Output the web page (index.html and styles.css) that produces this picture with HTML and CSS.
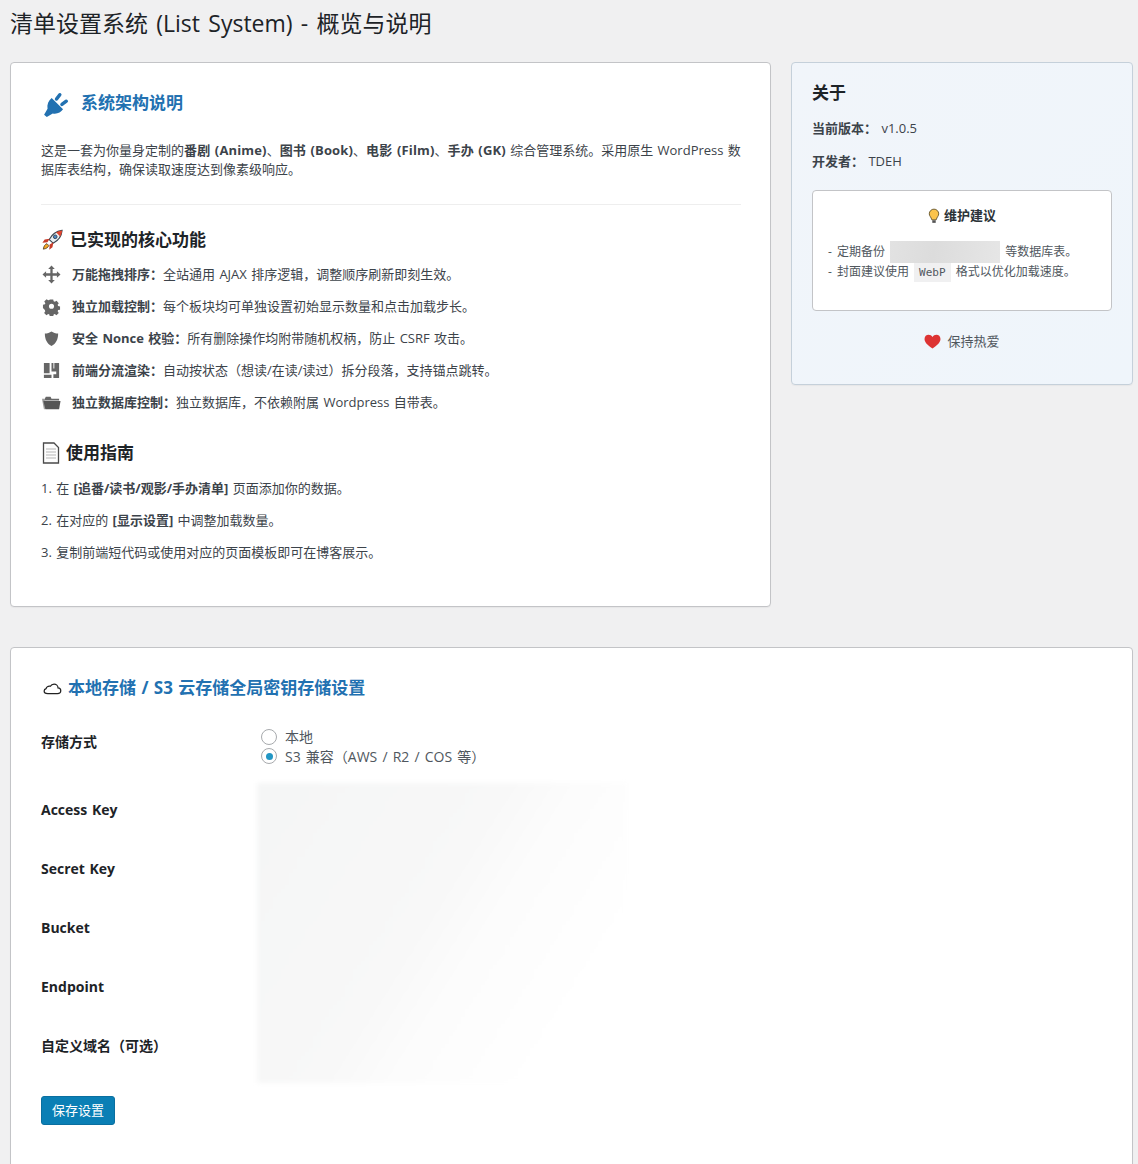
FILE: index.html
```html
<!DOCTYPE html>
<html lang="zh-CN">
<head>
<meta charset="utf-8">
<title>清单设置系统</title>
<link rel="stylesheet" href="styles.css">
</head>
<body>
<div class="wrap">
  <h1 class="page-title">清单设置系统 (List System) - 概览与说明</h1>
  <div class="columns">
    <section class="card main-card">
      <h2 class="arch-title">
        <svg class="plug" viewBox="0 0 24 24"><path fill="#2271b1" d="M8 5.500L18.500 16c-2 3-5.500 4.500-9.500 3.800L3.500 23 1 21l3.200-5.500C3.500 11.500 5 8 8 5.500z"/><path fill="none" stroke="#2271b1" stroke-width="3.200" stroke-linecap="round" d="M12.500 6.500L15.500 2.500M17.500 11.500L21.500 8.500"/></svg>
        <span>系统架构说明</span>
      </h2>
      <p class="intro">这是一套为你量身定制的<b>番剧 (Anime)</b>、<b>图书 (Book)</b>、<b>电影 (Film)</b>、<b>手办 (GK)</b> 综合管理系统。采用原生 WordPress 数据库表结构&#xFF0C;确保读取速度达到像素级响应。</p>
      <hr class="rule">
      <h3 class="sub-title rocket-title">
        <svg class="emoji" viewBox="0 0 24 24"><path fill="#e8eef2" stroke="#3a4650" stroke-width="1.200" d="M9 11.500C12 5.500 17 2.200 23 1.500c-.5 6-3.800 11-9.800 14z"/><path fill="#e2452f" d="M23 1.500c-2.600.3-4.800 1-6.600 2.100l4.500 4.500c1.100-1.900 1.900-4 2.100-6.600z"/><circle cx="15.500" cy="8.500" r="2" fill="#4a88c7" stroke="#33424e"/><path fill="#c73c2a" d="M9.500 10.500L4 11.500 1.500 15l5.500-.5zM13.500 14.500L12.500 20 9 22.500l.5-5.500z"/><path fill="#f6a623" stroke="#3a2a1a" stroke-width=".8" d="M6.500 16c-2 .6-3.500 2.500-4 6 3.500-.5 5.400-2 6-4z"/></svg>
        <span>已实现的核心功能</span>
      </h3>
      <ul class="features">
        <li>
          <svg class="f-icon" viewBox="0 0 20 20"><path fill="#666" d="M10 .500l3.500 3.800H11.200v4.500h4.500V6.500L19.500 10l-3.800 3.500v-2.300H11.200v4.500h2.300L10 19.500l-3.500-3.800h2.300v-4.500H4.300v2.300L.500 10l3.800-3.500v2.300h4.500V4.300H6.500z"/></svg>
          <span><b>万能拖拽排序&#xFF1A;</b>全站通用 AJAX 排序逻辑&#xFF0C;调整顺序刷新即刻生效。</span>
        </li>
        <li>
          <svg class="f-icon" viewBox="0 0 20 20"><path fill="#666" fill-rule="evenodd" d="M8 2h4l.5 2.300 1.400.6 2-1.300 2.600 2.800-1.300 2 .5 1.300 2.300.5v3.800l-2.300.5-.5 1.400 1.300 2-2.700 2.600-2-1.300-1.300.5-.5 2.300H8l-.5-2.300-1.400-.5-2 1.300-2.700-2.700 1.300-2-.5-1.300L0 12V8.300l2.300-.5.500-1.400-1.300-2 2.700-2.600 2 1.300 1.300-.5zM10 7a3 3 0 1 0 0 6 3 3 0 0 0 0-6z" transform="translate(1 .700) scale(.9)"/></svg>
          <span><b>独立加载控制&#xFF1A;</b>每个板块均可单独设置初始显示数量和点击加载步长。</span>
        </li>
        <li>
          <svg class="f-icon" viewBox="0 0 20 20"><path fill="#666" d="M10 2.500c2 1.400 4.300 2.100 7 2.200 0 6.200-2.200 10.700-7 13.300-4.800-2.600-7-7.100-7-13.300 2.700-.1 5-.8 7-2.200z"/></svg>
          <span><b>安全 Nonce 校验&#xFF1A;</b>所有删除操作均附带随机权柄&#xFF0C;防止 CSRF 攻击。</span>
        </li>
        <li>
          <svg class="f-icon" viewBox="0 0 20 20"><path fill="#666" d="M2 2h6v11H2zM13 2h5v16h-6v-4h3v-3h-5V2h2v6h1zM2 14.500h8V18H2z"/></svg>
          <span><b>前端分流渲染&#xFF1A;</b>自动按状态&#xFF08;想读/在读/读过&#xFF09;拆分段落&#xFF0C;支持锚点跳转。</span>
        </li>
        <li>
          <svg class="f-icon" viewBox="0 0 20 20"><path fill="#999" d="M0 6h3v11H2z"/><path fill="#666" d="M3 6l1-2h5l1 2h8v2H3z"/><path fill="#555" d="M1.500 8.500h18L18 17H3.500z"/></svg>
          <span><b>独立数据库控制&#xFF1A;</b>独立数据库&#xFF0C;不依赖附属 Wordpress 自带表。</span>
        </li>
      </ul>
      <h3 class="sub-title guide-title">
        <svg class="doc" viewBox="0 0 18 22"><path fill="#fdfdfd" stroke="#4a4a4a" stroke-width="1.300" d="M1.500 1h10.500l4.500 4.500V21h-15z"/><path stroke="#b5b5b5" d="M4 7h10M4 10h10M4 13h10M4 16h10"/></svg>
        <span>使用指南</span>
      </h3>
      <p class="guide first">1. 在 <b>[追番/读书/观影/手办清单]</b> 页面添加你的数据。</p>
      <p class="guide">2. 在对应的 <b>[显示设置]</b> 中调整加载数量。</p>
      <p class="guide">3. 复制前端短代码或使用对应的页面模板即可在博客展示。</p>
    </section>

    <aside class="card about-card">
      <h3 class="about-title">关于</h3>
      <p class="about-line"><b>当前版本&#xFF1A;</b> v1.0.5</p>
      <p class="about-line"><b>开发者&#xFF1A;</b> TDEH</p>
      <div class="tip-box">
        <h4 class="tip-title">
          <svg class="bulb" viewBox="0 0 14 18"><path fill="#fbc34a" stroke="#5a4a20" d="M7 1a5.500 5.500 0 0 0-5.500 5.500c0 2.500 2 3.500 3 7h5c1-3.500 3-4.500 3-7A5.500 5.500 0 0 0 7 1z"/><path fill="#555" d="M5 14h4v3H5z"/></svg>
          <span>维护建议</span>
        </h4>
        <p class="tip-line">- 定期备份 <span class="redacted"></span> 等数据库表。</p>
        <p class="tip-line">- 封面建议使用 <code class="tip-code">WebP</code> 格式以优化加载速度。</p>
      </div>
      <p class="love">
        <svg class="heart" viewBox="0 0 18 16"><path fill="#dd3333" d="M9 15.500C3.500 11.500.5 8.700.5 5.200.5 2.500 2.500.8 4.800.8c1.800 0 3.300.9 4.200 2.400C9.900 1.700 11.400.8 13.200.8c2.300 0 4.300 1.700 4.300 4.400 0 3.500-3 6.300-8.500 10.300z"/></svg>
        <span>保持热爱</span>
      </p>
    </aside>
  </div>

  <section class="card storage-card">
    <h2 class="storage-title">
      <svg class="cloud" viewBox="0 0 20 14"><path fill="#fff" stroke="#222" stroke-width="1.300" d="M5 12.800h10.200c2 0 3.500-1.300 3.500-3 0-1.600-1.300-2.900-2.900-3 0-2.300-2-4-4.200-4-1.700 0-3.100.9-3.800 2.300C7.200 5 5.800 4.800 4.600 5.600c-.8.500-1.200 1.200-1.300 2C2 8 1.200 9 1.200 10.100c0 1.500 1.600 2.700 3.800 2.700z"/></svg>
      <span>本地存储 / S3 云存储全局密钥存储设置</span>
    </h2>
    <div class="form-grid">
      <div class="f-label method-label">存储方式</div>
      <div class="radio-group">
        <label class="radio-row"><span class="radio"></span>本地</label>
        <label class="radio-row"><span class="radio checked"></span>S3 兼容&#xFF08;AWS / R2 / COS 等&#xFF09;</label>
      </div>
      <div class="f-label">Access Key</div><div class="f-field"></div>
      <div class="f-label">Secret Key</div><div class="f-field"></div>
      <div class="f-label">Bucket</div><div class="f-field"></div>
      <div class="f-label">Endpoint</div><div class="f-field"></div>
      <div class="f-label">自定义域名&#xFF08;可选&#xFF09;</div><div class="f-field"></div>
      <div class="blur-mask"></div>
    </div>
    <button class="save-btn" type="button">保存设置</button>
  </section>
</div>
</body>
</html>
```

FILE: styles.css
```css
* { box-sizing: border-box; }
html, body { margin: 0; padding: 0; height: 1164px; overflow: hidden; }
body {
  background: #f0f0f1;
  color: #3c434a;
  font-family: "Open Sans", "Noto Sans CJK SC", sans-serif;
  font-size: 13px;
  line-height: 19px;
  word-spacing: 1px;
}
b { font-weight: 700; }
p, h1, h2, h3, h4, ul { margin: 0; padding: 0; }
.wrap { padding: 0 5px 0 10px; }
.page-title {
  font-size: 23px;
  font-weight: 400;
  line-height: 29px;
  color: #1d2327;
  padding-top: 9px;
  height: 62px;
  word-spacing: 2.3px;
}
.columns { display: flex; gap: 20px; align-items: flex-start; }
.card {
  background: #fff;
  border: 1px solid #c3c4c7;
  border-radius: 4px;
  box-shadow: 0 1px 1px rgba(0,0,0,.04);
}
.main-card { width: 761px; height: 545px; padding: 0 29px 0 30px; flex: none; }
.arch-title {
  display: flex; align-items: center; gap: 12px;
  height: 28px; margin-top: 26px;
  font-size: 17px; font-weight: 700; line-height: 28px; color: #2271b1;
}
.plug { width: 26px; height: 26px; margin-left: 2px; margin-top: 4px; flex: none; }
.intro { margin-top: 24px; width: 700px; }
.intro b { letter-spacing: .15px; }
.rule { border: 0; border-top: 1px solid #eee; margin: 25px 0 0; }
.sub-title {
  display: flex; align-items: center;
  font-size: 17px; font-weight: 700; line-height: 24px; color: #1d2327;
}
.rocket-title { margin-top: 23px; gap: 7px; }
.emoji { width: 22px; height: 22px; flex: none; }
.features { list-style: none; margin-top: 13px; }
.features li {
  display: flex; align-items: center; gap: 11px;
  height: 19px; margin-bottom: 13px;
}
.f-icon { width: 19px; height: 19px; flex: none; margin-left: 1px; }
.guide-title { margin-top: 29px; gap: 6px; }
.doc { width: 18px; height: 22px; flex: none; margin-left: 1px; }
.guide { margin-top: 13px; }
.guide.first { margin-top: 14px; }

.about-card {
  width: 342px; height: 323px; flex: none;
  padding: 0 20px;
  background: linear-gradient(135deg, #f1f5fa, #eff5fb);
  border-color: #c5d0da;
}
.about-title { font-size: 17px; font-weight: 700; line-height: 24px; color: #1d2327; margin-top: 18px; }
.about-line { margin-top: 14px; }
.tip-box {
  margin-top: 19px; height: 121px;
  background: #fff;
  border: 1px solid #c3c4c7;
  border-radius: 4px;
  padding: 15px 15px 0;
}
.tip-title {
  display: flex; align-items: center; justify-content: center; gap: 4px;
  font-size: 13px; font-weight: 700; line-height: 19px; color: #2c3338;
}
.bulb { width: 12px; height: 16px; flex: none; }
.tip-line { font-size: 12px; line-height: 20px; height: 20px; color: #50575e; white-space: nowrap; word-spacing: 2px; }
.tip-title + .tip-line { margin-top: 17px; }
.redacted {
  display: inline-block; width: 110px; height: 22px;
  vertical-align: middle; margin: -2px 0 0;
  background: linear-gradient(100deg, #e2e2e2, #dcdcdc 40%, #e6e6e6);
}
.tip-code {
  font-family: "DejaVu Sans Mono", "Liberation Mono", monospace;
  font-size: 11px; background: #f0f0f1; padding: 3px 5px;
}
.love {
  display: flex; align-items: center; justify-content: center; gap: 6px;
  margin-top: 21px; color: #50575e;
}
.heart { width: 17px; height: 15px; flex: none; }

.storage-card { margin-top: 40px; height: 540px; padding: 0 30px; position: relative; }
.storage-title {
  display: flex; align-items: center; gap: 6px;
  margin-top: 27px; height: 26px;
  font-size: 17px; font-weight: 700; line-height: 26px; color: #2271b1;
}
.cloud { width: 19px; height: 14px; flex: none; margin-left: 2px; }
.form-grid {
  position: relative;
  display: grid;
  grid-template-columns: 220px 1fr;
  grid-auto-rows: 59px;
  margin-top: 26px;
  color: #1d2327;
}
.f-label { font-size: 14px; font-weight: 700; line-height: 20px; padding-top: 14px; }
.form-grid > .method-label { padding-top: 5px; }
.radio-group { color: #50575e; font-size: 14px; word-spacing: 1.5px; }
.radio-row { display: flex; align-items: center; gap: 8px; height: 19.5px; }
.radio {
  width: 16px; height: 16px; border-radius: 50%;
  border: 1px solid #a7aaad; background: #fff; flex: none;
  display: flex; align-items: center; justify-content: center;
}
.radio.checked::before {
  content: ""; width: 7px; height: 7px; border-radius: 50%; background: #2196c4;
}
.blur-mask {
  position: absolute;
  left: 216px; top: 56px; width: 370px; height: 300px;
  background: linear-gradient(122deg, #f5f6f6 0%, #f8f8f8 45%, #fcfcfc 58%, #ffffff 82%);
  filter: blur(2px);
}
.f-field { min-height: 59px; }
.save-btn {
  display: block;
  margin-top: 15px;
  width: 74px; height: 29px;
  background: #0a7fb5;
  color: #fff;
  border: 1px solid #0a6fa0;
  border-radius: 3px;
  font-family: inherit; font-size: 13px; line-height: 19px;
  padding: 0;
}
```
